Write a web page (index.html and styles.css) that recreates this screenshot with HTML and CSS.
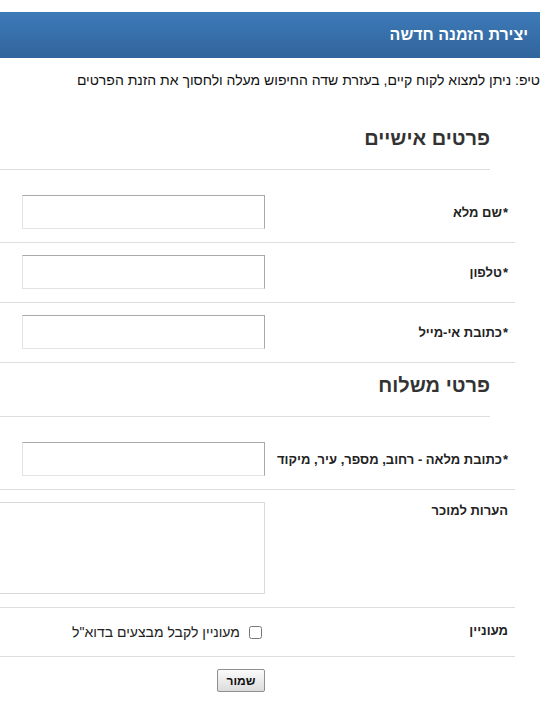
FILE: index.html
```html
<!DOCTYPE html>
<html lang="he">
<head>
    <meta charset="UTF-8">
    <meta name="viewport" content="width=device-width, initial-scale=1.0">
    <title>יצירת הזמנה חדשה</title>
    <link rel="stylesheet" href="styles.css">
</head>
<body>
    <div class="page" dir="rtl">
        <div class="page-header">יצירת הזמנה חדשה</div>
        <div class="tip">טיפ: ניתן למצוא לקוח קיים, בעזרת שדה החיפוש מעלה ולחסוך את הזנת הפרטים</div>

        <form class="order-form">
            <div class="section-title">פרטים אישיים</div>
            <div class="form-row">
                <label class="row-label"><span class="req">*</span>שם מלא</label>
                <input type="text" class="text-input">
            </div>
            <div class="form-row">
                <label class="row-label"><span class="req">*</span>טלפון</label>
                <input type="text" class="text-input">
            </div>
            <div class="form-row">
                <label class="row-label"><span class="req">*</span>כתובת אי-מייל</label>
                <input type="text" class="text-input">
            </div>

            <div class="section-title">פרטי משלוח</div>
            <div class="form-row">
                <label class="row-label"><span class="req">*</span>כתובת מלאה - רחוב, מספר, עיר, מיקוד</label>
                <input type="text" class="text-input">
            </div>
            <div class="form-row form-row-top">
                <label class="row-label">הערות למוכר</label>
                <textarea class="notes"></textarea>
            </div>
            <div class="form-row form-row-check">
                <label class="row-label">מעוניין</label>
                <label class="check-label"><input type="checkbox" class="check">מעוניין לקבל מבצעים בדוא"ל</label>
            </div>

            <div class="actions">
                <button type="button" class="save-button">שמור</button>
            </div>
        </form>
    </div>
</body>
</html>
```

FILE: styles.css
```css
body {
    margin: 0;
    background: #fff;
    font-family: "Liberation Sans", Arial, sans-serif;
    font-size: 13px;
    color: #222;
}
.page {
    width: 540px;
    padding-top: 12px;
    overflow: hidden;
}
.page-header {
    height: 46px;
    line-height: 46px;
    padding-right: 12px;
    background: linear-gradient(#3d7bb8, #31649c);
    color: #fff;
    font-size: 16px;
    font-weight: bold;
}
.tip {
    margin-top: 13px;
    line-height: 18px;
    font-size: 14px;
    color: #111;
}
.order-form {
    margin-right: 25px;
    margin-top: 27px;
}
.section-title {
    margin-right: 25px;
    padding-top: 8px;
    padding-bottom: 17px;
    margin-bottom: 13px;
    border-bottom: 1px solid #ddd;
    font-size: 20px;
    line-height: 28px;
    font-weight: bold;
    color: #333;
}
.form-row {
    display: flex;
    align-items: center;
    padding: 12px 0 13px;
    border-bottom: 1px solid #ddd;
}
.row-label {
    width: 243px;
    padding-right: 7px;
    flex-shrink: 0;
    font-weight: bold;
    white-space: nowrap;
    line-height: 17px;
}
.req {
    margin-left: 1px;
}
.text-input {
    width: 243px;
    height: 34px;
    box-sizing: border-box;
    margin: 0;
    border: 1px solid;
    border-color: #a9a9a9 #a9a9a9 #e3e3e3 #e3e3e3;
    font: inherit;
}
.form-row-top {
    align-items: flex-start;
}
.notes {
    flex-shrink: 0;
    width: 290px;
    height: 92px;
    box-sizing: border-box;
    margin: 0;
    border: 1px solid #d9d9d9;
    resize: none;
    font: inherit;
}
.form-row-check {
    padding: 12px 0 12px;
}
.form-row-check .row-label {
    margin-top: -3px;
}
.check-label {
    display: flex;
    align-items: center;
    height: 24px;
    font-size: 14px;
    color: #222;
}
.check {
    width: 13px;
    height: 13px;
    margin: 0 3px 0 9px;
}
.actions {
    padding-top: 12px;
    padding-right: 250px;
}
.save-button {
    width: 48px;
    height: 23px;
    padding: 0;
    border: 1px solid #8f8f8f;
    border-radius: 2px;
    background: linear-gradient(#fbfbfb, #dcdcdc);
    font-family: "Liberation Sans", Arial, sans-serif;
    font-size: 12px;
    font-weight: bold;
    color: #111;
}
```
